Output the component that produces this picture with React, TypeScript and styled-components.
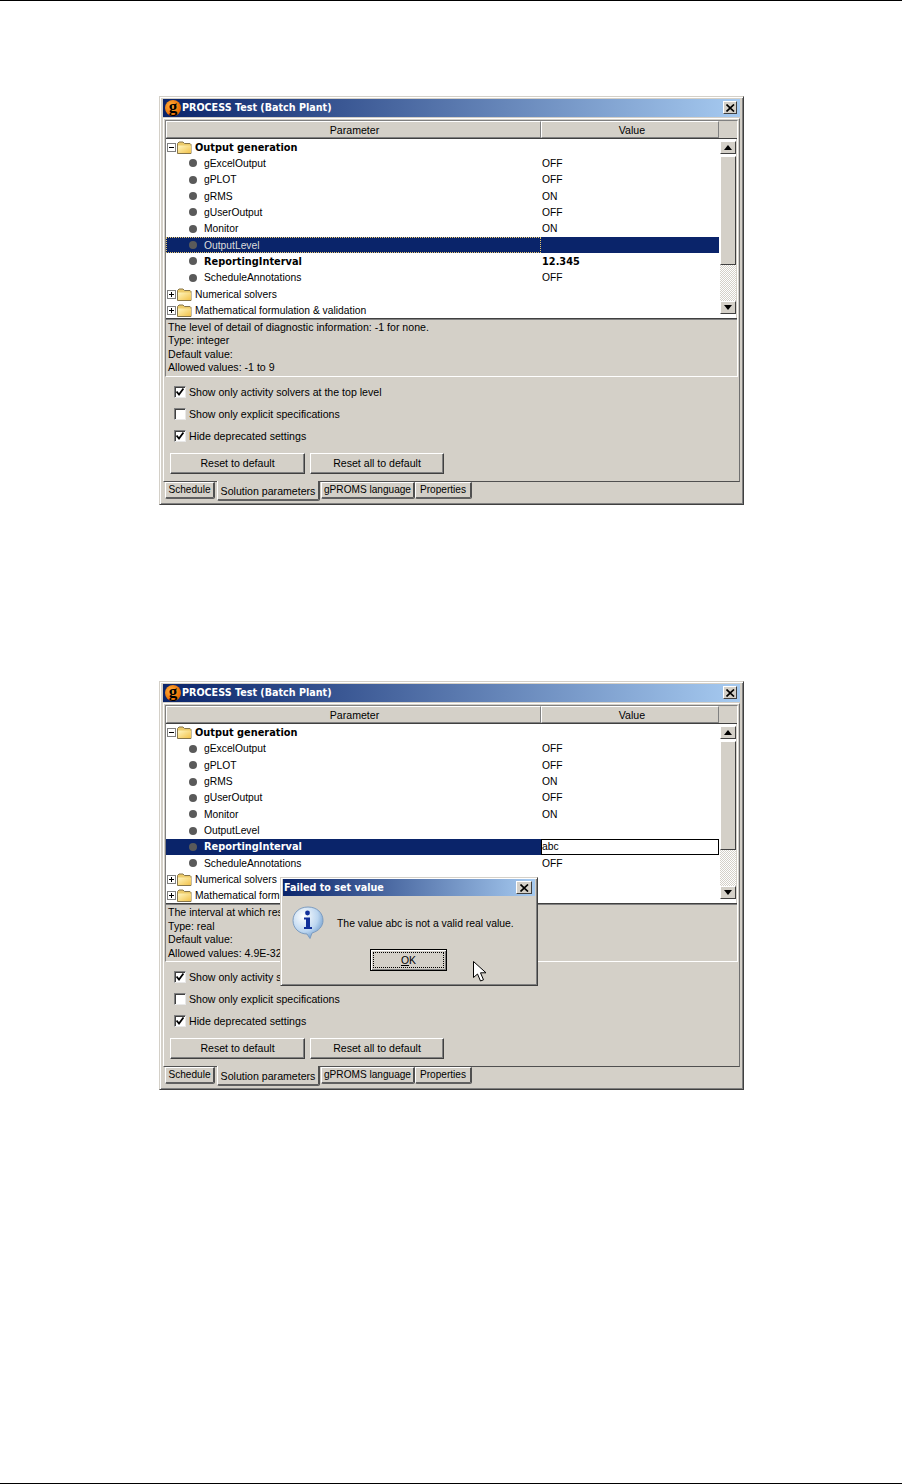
import type { ReactNode } from 'react';
import styled, { createGlobalStyle } from 'styled-components';

const GlobalStyle = createGlobalStyle`
    html, body {
        margin: 0;
        padding: 0;
        background: #fff;
    }
`;

const Page = styled.div`
    box-sizing: border-box;
    width: 902px;
    height: 1484px;
    padding: 95px 0 0 159px;
    border-top: 1px solid #000;
    border-bottom: 1px solid #000;
    display: flex;
    flex-direction: column;
    gap: 176.4px;
    font-family: 'Liberation Sans', Arial, sans-serif;
    font-size: 10.6px;
    color: #000;
`;

const Frame = styled.div`
    position: relative;
    box-sizing: border-box;
    width: 585px;
    height: 409px;
    padding: 2px 3px;
    background: #d4d0c8;
    border: 1px solid;
    border-color: #d4d0c8 #404040 #404040 #d4d0c8;
    box-shadow: inset 1px 1px #fff, inset -1px -1px #808080;
`;

const TitleBar = styled.div<{ $small?: boolean }>`
    box-sizing: border-box;
    display: flex;
    align-items: center;
    height: ${(p) => (p.$small ? 17 : 18)}px;
    padding: 0 3px ${(p) => (p.$small ? 0 : 1)}px 0;
    background: linear-gradient(90deg, #0a246a, #a6caf0);
`;

const TitleText = styled.span`
    flex: 1;
    margin-left: 1px;
    color: #fff;
    font-family: 'DejaVu Sans', sans-serif;
    font-weight: 700;
    font-size: 9.6px;
    white-space: nowrap;
`;

const AppBadge = styled.span`
    display: flex;
    align-items: center;
    justify-content: center;
    width: 16px;
    height: 16px;
    margin-left: 2px;
    border-radius: 50%;
    background: radial-gradient(circle at 35% 35%, #ffae3c, #e86a00 70%, #a84400);
    color: #000;
    font-family: 'Liberation Serif', serif;
    font-weight: 700;
    font-size: 17px;
    line-height: 13px;
    padding-bottom: 2px;
    box-sizing: border-box;
`;

const CloseButton = styled.span<{ $width: number }>`
    box-sizing: border-box;
    display: flex;
    align-items: center;
    justify-content: center;
    width: ${(p) => p.$width}px;
    height: 13px;
    background: #d4d0c8;
    border: 1px solid;
    border-color: #fff #404040 #404040 #fff;
`;

const TabPanel = styled.div`
    margin-top: 1px;
    padding: 1px 1px 7px 1px;
    border: 1px solid;
    border-color: #fff #707070 #505050 #fff;
`;

const Pane = styled.div`
    border: 1px solid;
    border-color: #808080 #fff #fff #808080;
`;

const TableGrid = styled.div`
    display: grid;
    grid-template-columns: 1fr 17px;
    grid-template-rows: 18px 179px;
`;

const HeaderRow = styled.div`
    display: grid;
    grid-template-columns: 375px 178px;
    grid-column: 1 / 3;
    border-bottom: 1px solid #404040;
    box-sizing: border-box;
`;

const HeaderCell = styled.div<{ $shift: number }>`
    box-sizing: border-box;
    display: flex;
    align-items: center;
    justify-content: center;
    height: 17px;
    padding-left: ${(p) => p.$shift}px;
    background: #d4d0c8;
    border: 1px solid;
    border-color: #fff #808080 #808080 #fff;
`;

const Tree = styled.div`
    overflow: hidden;
    background: #fff;
    font-size: 10.3px;
`;

const Row = styled.div`
    display: grid;
    grid-template-columns: 375px 178px;
    height: 16.33px;
`;

const NameCell = styled.div<{ $active?: boolean; $focus?: boolean; $bold?: boolean }>`
    display: flex;
    align-items: center;
    box-sizing: border-box;
    white-space: nowrap;
    padding-left: 1px;
    background: ${(p) => (p.$active ? '#0a246a' : 'transparent')};
    color: ${(p) => (p.$active ? (p.$bold ? '#fff' : '#dcdcdc') : '#000')};
    font-family: ${(p) => (p.$bold ? "'DejaVu Sans', sans-serif" : 'inherit')};
    font-weight: ${(p) => (p.$bold ? 700 : 400)};
    font-size: ${(p) => (p.$bold ? '9.8px' : 'inherit')};
    outline: ${(p) => (p.$focus ? '1px dotted #e8c870' : 'none')};
    outline-offset: -1px;
`;

const ValueCell = styled.div<{ $active?: boolean; $bold?: boolean; $editing?: boolean }>`
    display: flex;
    align-items: center;
    box-sizing: border-box;
    padding-left: ${(p) => (p.$editing ? 0 : 1)}px;
    background: ${(p) => (p.$editing ? '#fff' : p.$active ? '#0a246a' : 'transparent')};
    border: ${(p) => (p.$editing ? '1px solid #000' : 'none')};
    font-family: ${(p) => (p.$bold ? "'DejaVu Sans', sans-serif" : 'inherit')};
    font-weight: ${(p) => (p.$bold ? 700 : 400)};
    font-size: ${(p) => (p.$bold ? '9.8px' : 'inherit')};
`;

const Expander = styled.span`
    box-sizing: border-box;
    display: flex;
    align-items: center;
    justify-content: center;
    width: 9px;
    height: 9px;
    margin-right: 1px;
    border: 1px solid #808080;
    background: #fff;
`;

const Bullet = styled.span`
    width: 8px;
    height: 8px;
    margin: 0 7px 0 22px;
    border-radius: 50%;
    background: #5a5a5a;
    flex: none;
`;

const FolderSlot = styled.span`
    display: flex;
    margin-right: 3px;
`;

const ScrollTrack = styled.div`
    display: flex;
    flex-direction: column;
    width: 16px;
    padding: 2px 0 4px;
    box-sizing: border-box;
    background: #fff;
`;

const ScrollButton = styled.div`
    box-sizing: border-box;
    display: flex;
    align-items: center;
    justify-content: center;
    height: 13px;
    background: #d4d0c8;
    border: 1px solid;
    border-color: #fff #404040 #404040 #fff;
`;

const ScrollThumb = styled.div`
    box-sizing: border-box;
    height: 109px;
    margin-top: 2px;
    background: #d4d0c8;
    border: 1px solid;
    border-color: #fff #404040 #404040 #fff;
`;

const ScrollGap = styled.div`
    flex: 1;
    background-image: conic-gradient(#fff 25%, #d4d0c8 0 50%, #fff 0 75%, #d4d0c8 0);
    background-size: 2px 2px;
`;

const Info = styled.div`
    box-sizing: border-box;
    height: 58px;
    padding: 2px 0 0 2px;
    border-top: 1px solid #404040;
    box-shadow: inset 0 1px #808080;
    line-height: 13.4px;
`;

const InfoLine = styled.div`
    white-space: nowrap;
`;

const Options = styled.div`
    display: flex;
    flex-direction: column;
    padding: 4px 0 0 9px;
`;

const OptionRow = styled.div`
    display: flex;
    align-items: center;
    gap: 3px;
    height: 22px;
`;

const CheckBox = styled.span`
    box-sizing: border-box;
    display: flex;
    align-items: center;
    justify-content: center;
    width: 12px;
    height: 12px;
    background: #fff;
    border: 1px solid;
    border-color: #808080 #e8e8e8 #e8e8e8 #808080;
    box-shadow: inset 1px 1px #404040;
`;

const Buttons = styled.div`
    display: flex;
    gap: 5px;
    padding: 6px 0 0 5px;
`;

const PushButton = styled.div<{ $width: number }>`
    box-sizing: border-box;
    display: flex;
    align-items: center;
    justify-content: center;
    width: ${(p) => p.$width}px;
    height: 21px;
    padding-bottom: 1px;
    background: #d4d0c8;
    border: 1px solid;
    border-color: #fff #404040 #404040 #fff;
    box-shadow: inset -1px -1px #808080;
`;

const TabBar = styled.div`
    display: flex;
    align-items: flex-start;
    padding-left: 2px;
`;

const Tab = styled.div<{ $width: number; $active?: boolean }>`
    position: relative;
    box-sizing: border-box;
    display: flex;
    align-items: center;
    justify-content: center;
    width: ${(p) => p.$width}px;
    height: ${(p) => (p.$active ? 20 : 17)}px;
    margin: ${(p) => (p.$active ? '-1px 1px 0 2px' : '0')};
    padding: ${(p) => (p.$active ? '1px 0 0' : '0 0 1px')};
    background: #d4d0c8;
    border-style: solid;
    border-width: ${(p) => (p.$active ? 0 : 1)}px 2px 2px 1px;
    border-color: #fff #505050 #606060 #fff;
    border-radius: 0 0 2px 2px;
    font-size: ${(p) => (p.$active ? '10.6px' : '10.1px')};
    white-space: nowrap;
`;

const Dialog = styled.div`
    position: absolute;
    left: 120px;
    top: 195px;
    box-sizing: border-box;
    width: 258px;
    height: 109px;
    padding: 1px 2px;
    font-size: 10.4px;
    background: #d4d0c8;
    border: 1px solid;
    border-color: #d4d0c8 #404040 #404040 #d4d0c8;
    box-shadow: inset 1px 1px #fff, inset -1px -1px #808080;
`;

const DialogBody = styled.div`
    display: flex;
    align-items: flex-start;
    gap: 13px;
    padding: 10px 0 0 9px;
`;

const DialogText = styled.div`
    margin-top: 12px;
    white-space: nowrap;
`;

const DialogFooter = styled.div`
    display: flex;
    justify-content: center;
    margin-top: 10px;
    padding-right: 1px;
`;

const DefaultButton = styled.div`
    box-sizing: border-box;
    width: 77px;
    height: 22px;
    padding: 2px;
    background: #d4d0c8;
    border: 1px solid #000;
    box-shadow: inset 1px 1px #fff, inset -1px -1px #808080;
`;

const FocusRing = styled.div`
    box-sizing: border-box;
    display: flex;
    align-items: center;
    justify-content: center;
    height: 100%;
    border: 1px dotted #000;
`;

const Underlined = styled.span`
    text-decoration: underline;
`;

const Pointer = styled.svg`
    position: absolute;
    left: 192px;
    top: 83px;
`;

function Folder({ id }: { id: string }) {
    return (
        <svg width="15" height="13" viewBox="0 0 15 13">
            <defs>
                <linearGradient id={id} x1="0" y1="0" x2="1" y2="1">
                    <stop offset="0" stopColor="#fff6c0" />
                    <stop offset="1" stopColor="#f2c24a" />
                </linearGradient>
            </defs>
            <path d="M.5 12.500V2.500L2 1h4l1.500 1.500H13l1 1v9z" fill="#eccb6a" stroke="#86754a" />
            <path d="M1 4.500h13v7.500H1z" fill={`url(#${id})`} />
        </svg>
    );
}

function CloseGlyph() {
    return (
        <svg width="9" height="8" viewBox="0 0 9 8">
            <path d="M.5 .5l7.500 7M8 .5l-7.500 7" stroke="#000" strokeWidth="1.700" fill="none" />
        </svg>
    );
}

function Arrow({ up }: { up?: boolean }) {
    return (
        <svg width="8" height="5" viewBox="0 0 8 5">
            <path d={up ? 'M4 0l4 5H0z' : 'M4 5L8 0H0z'} fill="#000" />
        </svg>
    );
}

function Tick() {
    return (
        <svg width="8" height="8" viewBox="0 0 8 8">
            <path d="M.5 3.500l2.500 3 4.500-6" stroke="#000" strokeWidth="1.800" fill="none" />
        </svg>
    );
}

function InfoIcon() {
    return (
        <svg width="32" height="33" viewBox="0 0 32 33">
            <defs>
                <radialGradient id="bubble" cx="0.35" cy="0.3" r="0.8">
                    <stop offset="0" stopColor="#ffffff" />
                    <stop offset="0.6" stopColor="#bcd6f0" />
                    <stop offset="1" stopColor="#5f8fc4" />
                </radialGradient>
            </defs>
            <path d="M16 1C7 1 1 7 1 14.500S7 28 15 28l3 4.500 2-5.500C27 25 31 20 31 14.500 31 7 25 1 16 1z" fill="url(#bubble)" stroke="#7d9cc0" />
            <circle cx="15.500" cy="7" r="2.400" fill="#12309a" />
            <path d="M12 11.500h6V21h2v2h-8v-2h2v-7.500h-2z" fill="#12309a" />
        </svg>
    );
}

type RowData = {
    kind: 'group' | 'leaf';
    name: string;
    value?: string;
    open?: boolean;
    bold?: boolean;
};

const rows: RowData[] = [
    { kind: 'group', name: 'Output generation', open: true, bold: true },
    { kind: 'leaf', name: 'gExcelOutput', value: 'OFF' },
    { kind: 'leaf', name: 'gPLOT', value: 'OFF' },
    { kind: 'leaf', name: 'gRMS', value: 'ON' },
    { kind: 'leaf', name: 'gUserOutput', value: 'OFF' },
    { kind: 'leaf', name: 'Monitor', value: 'ON' },
    { kind: 'leaf', name: 'OutputLevel' },
    { kind: 'leaf', name: 'ReportingInterval', value: '12.345', bold: true },
    { kind: 'leaf', name: 'ScheduleAnnotations', value: 'OFF' },
    { kind: 'group', name: 'Numerical solvers' },
    { kind: 'group', name: 'Mathematical formulation & validation' },
];

type WindowProps = {
    id: string;
    activeRow: string;
    focusName?: boolean;
    editValue?: string;
    info: string[];
    children?: ReactNode;
};

function ProcessWindow({ id, activeRow, focusName, editValue, info, children }: WindowProps) {
    return (
        <Frame>
            <TitleBar>
                <AppBadge>g</AppBadge>
                <TitleText>PROCESS Test (Batch Plant)</TitleText>
                <CloseButton $width={14}>
                    <CloseGlyph />
                </CloseButton>
            </TitleBar>
            <TabPanel>
                <Pane>
                    <TableGrid>
                        <HeaderRow>
                            <HeaderCell $shift={2}>Parameter</HeaderCell>
                            <HeaderCell $shift={4}>Value</HeaderCell>
                        </HeaderRow>
                        <Tree>
                            {rows.map((row, i) => {
                                const active = row.name === activeRow;
                                const editing = active && editValue !== undefined;
                                return (
                                    <Row key={row.name}>
                                        <NameCell $active={active} $focus={active && focusName} $bold={row.bold}>
                                            {row.kind === 'group' ? (
                                                <>
                                                    <Expander>
                                                        <svg width="7" height="7" viewBox="0 0 7 7">
                                                            <path d={row.open ? 'M1 3.500h5' : 'M1 3.500h5M3.500 1v5'} stroke="#000" />
                                                        </svg>
                                                    </Expander>
                                                    <FolderSlot>
                                                        <Folder id={`${id}-folder-${i}`} />
                                                    </FolderSlot>
                                                </>
                                            ) : (
                                                <Bullet />
                                            )}
                                            {row.name}
                                        </NameCell>
                                        <ValueCell $active={active} $editing={editing} $bold={row.bold && !editing}>
                                            {editing ? editValue : row.value}
                                        </ValueCell>
                                    </Row>
                                );
                            })}
                        </Tree>
                        <ScrollTrack>
                            <ScrollButton>
                                <Arrow up />
                            </ScrollButton>
                            <ScrollThumb />
                            <ScrollGap />
                            <ScrollButton>
                                <Arrow />
                            </ScrollButton>
                        </ScrollTrack>
                    </TableGrid>
                    <Info>
                        {info.map((line) => (
                            <InfoLine key={line}>{line}</InfoLine>
                        ))}
                    </Info>
                </Pane>
                <Options>
                    <OptionRow>
                        <CheckBox>
                            <Tick />
                        </CheckBox>
                        Show only activity solvers at the top level
                    </OptionRow>
                    <OptionRow>
                        <CheckBox />
                        Show only explicit specifications
                    </OptionRow>
                    <OptionRow>
                        <CheckBox>
                            <Tick />
                        </CheckBox>
                        Hide deprecated settings
                    </OptionRow>
                </Options>
                <Buttons>
                    <PushButton $width={135}>Reset to default</PushButton>
                    <PushButton $width={134}>Reset all to default</PushButton>
                </Buttons>
            </TabPanel>
            <TabBar>
                <Tab $width={50}>Schedule</Tab>
                <Tab $width={103} $active>
                    Solution parameters
                </Tab>
                <Tab $width={94}>gPROMS language</Tab>
                <Tab $width={57}>Properties</Tab>
            </TabBar>
            {children}
        </Frame>
    );
}

function App() {
    return (
        <>
            <GlobalStyle />
            <Page>
                <ProcessWindow
                    id="first"
                    activeRow="OutputLevel"
                    focusName
                    info={[
                        'The level of detail of diagnostic information: -1 for none.',
                        'Type: integer',
                        'Default value:',
                        'Allowed values: -1 to 9',
                    ]}
                />
                <ProcessWindow
                    id="second"
                    activeRow="ReportingInterval"
                    editValue="abc"
                    info={[
                        'The interval at which results are reported.',
                        'Type: real',
                        'Default value:',
                        'Allowed values: 4.9E-324 to 1.8E308',
                    ]}
                >
                    <Dialog>
                        <TitleBar $small>
                            <TitleText>Failed to set value</TitleText>
                            <CloseButton $width={16}>
                                <CloseGlyph />
                            </CloseButton>
                        </TitleBar>
                        <DialogBody>
                            <InfoIcon />
                            <DialogText>The value abc is not a valid real value.</DialogText>
                        </DialogBody>
                        <DialogFooter>
                            <DefaultButton>
                                <FocusRing>
                                    <span>
                                        <Underlined>O</Underlined>K
                                    </span>
                                </FocusRing>
                            </DefaultButton>
                        </DialogFooter>
                        <Pointer width="13" height="21" viewBox="0 0 13 21">
                            <path d="M.5.500v16l4-3.500 3 7 3-1.200-3-7h5.500z" fill="#fff" stroke="#000" />
                        </Pointer>
                    </Dialog>
                </ProcessWindow>
            </Page>
        </>
    );
}

export default App;
